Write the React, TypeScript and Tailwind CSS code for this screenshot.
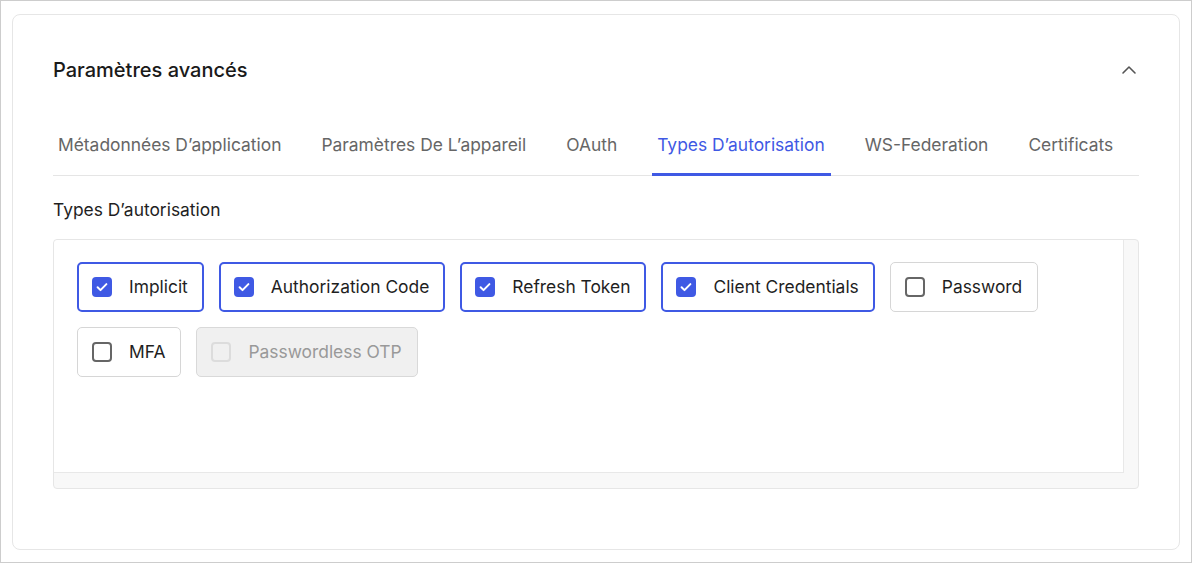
import { ChevronUp } from "lucide-react";

type Grant = { label: string; checked: boolean; disabled?: boolean };

const tabs = [
  "Métadonnées D’application",
  "Paramètres De L’appareil",
  "OAuth",
  "Types D’autorisation",
  "WS-Federation",
  "Certificats",
];

const grants: Grant[] = [
  { label: "Implicit", checked: true },
  { label: "Authorization Code", checked: true },
  { label: "Refresh Token", checked: true },
  { label: "Client Credentials", checked: true },
  { label: "Password", checked: false },
  { label: "MFA", checked: false },
  { label: "Passwordless OTP", checked: false, disabled: true },
];

function GrantOption({ g }: { g: Grant }) {
  if (g.checked) {
    return (
      <label className="flex items-center gap-[17px] rounded-[5px] border-2 border-[#3f59e4] bg-white pl-[13px] pr-[14px] py-[11px]">
        <span className="flex h-5 w-5 items-center justify-center rounded-[4px] bg-[#3f59e4]">
          <svg width="14" height="14" viewBox="0 0 14 14" fill="none">
            <path d="M2.6 7.3l2.9 2.8L11.4 4.1" stroke="white" strokeWidth="2" strokeLinecap="round" strokeLinejoin="round" />
          </svg>
        </span>
        <span className="text-[17.4px] leading-6 text-[#1f1f1f]">{g.label}</span>
      </label>
    );
  }
  if (g.disabled) {
    return (
      <label className="flex items-center gap-[17px] rounded-[5px] border border-[#d9d9d9] bg-[#f0f0f0] pl-[14px] pr-[15px] py-[12px]">
        <span className="h-5 w-5 rounded-[4px] border-2 border-[#dcdcdc]" />
        <span className="text-[17.4px] leading-6 text-[#999999]">{g.label}</span>
      </label>
    );
  }
  return (
    <label className="flex items-center gap-[17px] rounded-[5px] border border-[#d6d6d6] bg-white pl-[14px] pr-[15px] py-[12px]">
      <span className="h-5 w-5 rounded-[4px] border-2 border-[#666666]" />
      <span className="text-[17.4px] leading-6 text-[#1f1f1f]">{g.label}</span>
    </label>
  );
}

export default function App() {
  const active = 3;
  return (
    <div className="h-[563px] w-[1192px] border border-[#cdcdcd] bg-white pt-[13px] pl-[11px] pr-[11px] font-['Inter',sans-serif]">
      <div className="h-[536px] rounded-[8px] border border-[#e6e6e6] px-10 pt-[41px]">
        {/* Header */}
        <div className="flex items-center justify-between">
          <h2 className="text-[20px] leading-7 font-medium text-[#1a1a1a]">Paramètres avancés</h2>
          <ChevronUp size={24} strokeWidth={1.6} className="mr-[-2px] text-[#555555]" />
        </div>

        {/* Tabs */}
        <div className="mt-[34px] flex gap-[29px] border-b border-[#e5e5e5]">
          {tabs.map((t, i) => (
            <div
              key={t}
              className={
                i === active
                  ? "-mb-px border-b-[3px] border-[#3f59e4] pl-[5px] pr-[6px] pt-[15px] pb-[16px] text-[17.4px] leading-6 text-[#3f59e4]"
                  : "-mb-px border-b-[3px] border-transparent pl-[5px] pr-[6px] pt-[15px] pb-[16px] text-[17.4px] leading-6 text-[#666666]"
              }
            >
              {t}
            </div>
          ))}
        </div>

        {/* Grant types */}
        <div className="mt-[22px] text-[17.4px] leading-6 text-[#1f1f1f]">Types D’autorisation</div>
        <div className="mt-[17px] flex h-[250px] flex-col rounded-[4px] border border-[#e6e6e6] bg-[#f8f8f8]">
          <div className="flex min-h-0 flex-1">
            <div className="flex-1 rounded-tl-[4px] border-r border-b border-[#e8e8e8] bg-white pt-[22px] pl-[23px]">
              <div className="flex flex-wrap gap-x-[15px] gap-y-[15px]">
                {grants.map((g) => (
                  <GrantOption key={g.label} g={g} />
                ))}
              </div>
            </div>
            <div className="w-[14px]" />
          </div>
          <div className="h-[15px]" />
        </div>
      </div>
    </div>
  );
}
